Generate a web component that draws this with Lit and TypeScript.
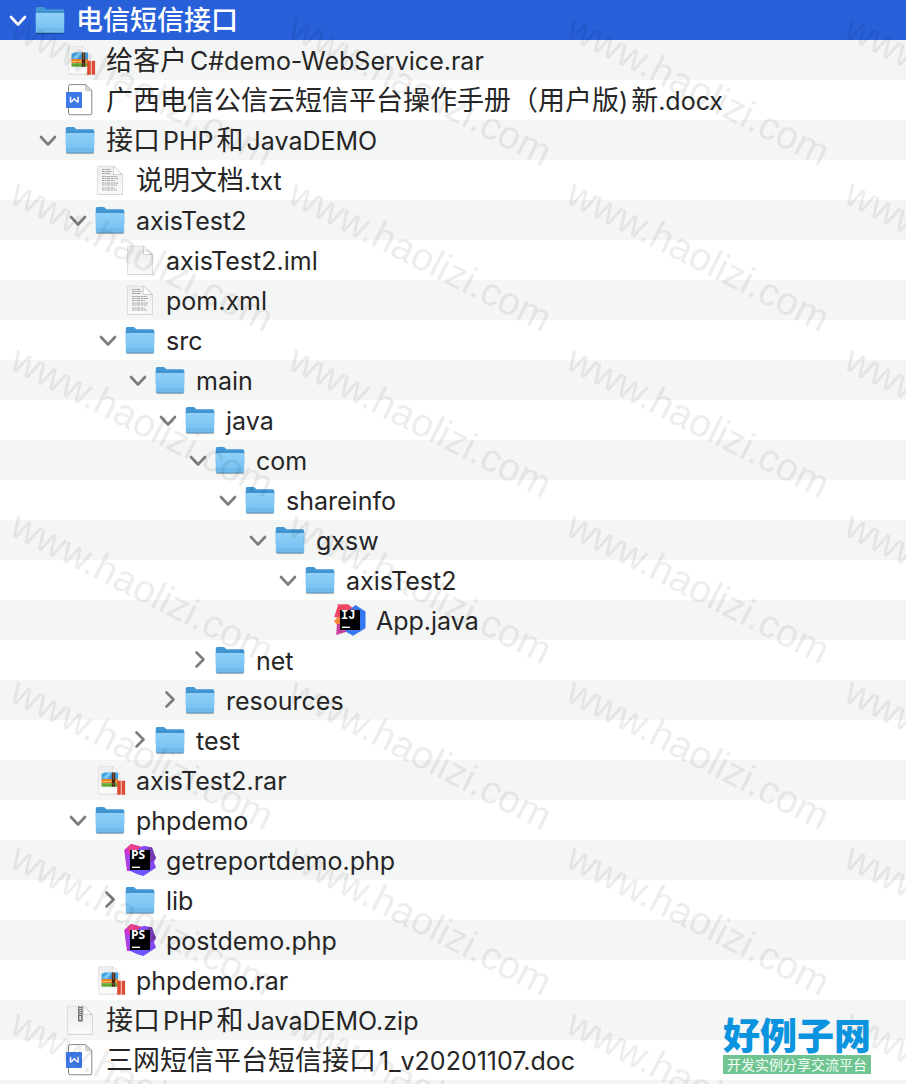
import { LitElement, html, css, svg, nothing } from 'lit';
import { customElement, property, state } from 'lit/decorators.js';
import { classMap } from 'lit/directives/class-map.js';
import { styleMap } from 'lit/directives/style-map.js';

type Kind = 'folder' | 'rar' | 'word' | 'text' | 'blank' | 'zip' | 'idea' | 'phpstorm';

interface Entry {
  name: string;
  kind: Kind;
  open?: boolean;
  children?: Entry[];
}

const folder = (name: string, children: Entry[], open = true): Entry => ({
  name,
  kind: 'folder',
  open,
  children,
});
const file = (name: string, kind: Kind): Entry => ({ name, kind });

const TREE: Entry = folder('电信短信接口', [
  file('给客户C#demo-WebService.rar', 'rar'),
  file('广西电信公信云短信平台操作手册（用户版)新.docx', 'word'),
  folder('接口PHP和JavaDEMO', [
    file('说明文档.txt', 'text'),
    folder('axisTest2', [
      file('axisTest2.iml', 'blank'),
      file('pom.xml', 'text'),
      folder('src', [
        folder('main', [
          folder('java', [
            folder('com', [
              folder('shareinfo', [
                folder('gxsw', [folder('axisTest2', [file('App.java', 'idea')])]),
              ]),
            ]),
            folder('net', [], false),
          ]),
          folder('resources', [], false),
        ]),
        folder('test', [], false),
      ]),
    ]),
    file('axisTest2.rar', 'rar'),
    folder('phpdemo', [
      file('getreportdemo.php', 'phpstorm'),
      folder('lib', [], false),
      file('postdemo.php', 'phpstorm'),
    ]),
    file('phpdemo.rar', 'rar'),
  ]),
  file('接口PHP和JavaDEMO.zip', 'zip'),
  file('三网短信平台短信接口1_v20201107.doc', 'word'),
]);

const page = svg`
  <path d="M3.500 2.500h16.500l8.800 8V31H3.500z" fill="#000" opacity=".2"/>
  <path d="M3.500 2h16l8.800 8.500V30.300H3.500z" fill="url(#paper)" stroke="#d6d6d6" stroke-width=".6"/>
  <path d="M19.500 2l8.500 8.500h-8.500z" fill="#fff" stroke="#c2c2c2" stroke-width=".7"/>
`;

const ICONS = {
  folder: svg`
    <path d="M2.500 28.500h27v1.600h-27z" fill="#000" opacity=".3"/>
    <path d="M1.800 4.500Q1.800 3 3.300 3h6q1 0 1.700.8l.8.900q.5.500 1.300.500h15.600Q30.200 5.200 30.200 6.700V20H1.800z" fill="#4297d6"/>
    <path d="M1.800 8.600q0-.8 1-.8h26.400q1 0 1 .8v1.500H1.800z" fill="#2f7fbd"/>
    <path d="M1.800 9.700q0-1 1-1h26.400q1 0 1 1v18q0 1.300-1.300 1.300H3.100Q1.800 29 1.800 27.700z" fill="url(#sky)"/>
    <path d="M2.300 24.700h27.400M2.300 26.700h27.400" stroke="#5aa7dc" stroke-width=".6"/>
    <path d="M2.300 28.500h27.400" stroke="#569fd0" stroke-width=".8"/>
  `,
  rar: svg`
    <path d="M4.500 3h14l7.500 8v19.500h-21.500z" fill="#000" opacity=".14"/>
    <path d="M4.500 2.500h14L26 10.500V30H4.500z" fill="url(#paper)" stroke="#dedede" stroke-width=".6"/>
    <path d="M18.500 2.500l7.500 8h-7.500z" fill="#fff" stroke="#cfcfcf" stroke-width=".6"/>
    <path d="M7.500 15V10l3-1.500H24V15z" fill="#3e9ee0"/>
    <path d="M8 14l6-5h4l-5 6z" fill="#7cc8f5"/>
    <path d="M7.500 15H24v4.200H7.500z" fill="#ec8330"/>
    <path d="M7.500 17h16.500v1H7.500z" fill="#f9bd54"/>
    <path d="M7.500 19.200H24v3.500H7.500z" fill="#63aa35"/>
    <path d="M17.800 8.500h3.400v14.200h-3.400z" fill="#57301c"/>
    <path d="M19.500 9.500v12" stroke="#b88a5c" stroke-width="1" stroke-dasharray="1 1"/>
    <path d="M18.500 15.500h2v3h-2z" fill="#32190d"/>
    <path d="M23.200 16.800h3.600v14h-3.600zM27.600 16.800h3.500v14h-3.500z" fill="#df4b32"/>
  `,
  word: svg`
    <path d="M6.500.6h15.300l6 6V28.800q0 2-2 2H6.500q-2 0-2-2V2.600q0-2 2-2z" fill="#fff" stroke="#777" stroke-width=".9"/>
    <path d="M21.500.8v4.700q0 1.300 1.300 1.300h5z" fill="#d7d7d7" stroke="#aaa" stroke-width=".5"/>
    <rect x="2" y="8" width="16" height="16" rx="1" fill="#3d78e8"/>
    <path d="M6.500 12.800v4.500q0 1.200 1 .4l2.800-2.900 2.800 2.900q1 .8 1-.4v-4.500" fill="none" stroke="#fff" stroke-width="1.500"/>
  `,
  text: svg`
    ${page}
    <path d="M8 5.500h9M8 7.500h10M8 9.500h9M8 12.500h15M8 14.500h16M8 16.500h13M8 19h16M8 21h15M8 24h13M8 26h15"
      stroke="#999" stroke-width=".9" stroke-dasharray="2.600 .6 1.400 .4 3.200 .7"/>
  `,
  blank: page,
  zip: svg`
    ${page}
    <path d="M14 2h4.600v15.500h-4.600z" fill="#777"/>
    <path d="M16.300 2v10" stroke="#e7e7e7" stroke-width="2" stroke-dasharray="1 1"/>
    <path d="M14.800 11.500h3v5h-3z" fill="#ddd" stroke="#555" stroke-width=".8"/>
  `,
  idea: svg`
    <path d="M4 1.500L3 .5 14 .2l5 4L11 15 .2 13z" fill="#ee4560"/>
    <path d="M0 17l4-4h8v10l-7 1z" fill="#f2873b"/>
    <path d="M3 20h12v7L2.200 31z" fill="#c83f9c"/>
    <path d="M15 6l6.500-5L31.500 7.500v16.700L19 31.700l-7.500-4.200z" fill="#3577f0"/>
    <path d="M15 6l4-2 7 8-8 3z" fill="#794fae"/>
    <rect x="6" y="6" width="20" height="20"/>
    <text class="mono" x="7" y="15">IJ</text>
    <path d="M8 23.300h8" stroke="#fff" stroke-width="1.400"/>
  `,
  phpstorm: svg`
    <path d="M.2 6L7 0l12 3 7 9-10 15H3z" fill="#c933ce"/>
    <path d="M7 0l11 3.500-3 5H5L3 4z" fill="#e8438a"/>
    <path d="M14 5l6-3.300 8 1.800 2 6 2 4.500-2 4 2 5.500-12.500 8.300L13 30z" fill="#8648f0"/>
    <path d="M24 3l4 .500 2 6 2 4.500-6 5z" fill="#7439ae"/>
    <path d="M1 10l8 3v11l4 6-9-4z" fill="#a044e8"/>
    <path d="M5 26l21-1 6-1.500-12.500 8.300L13 30z" fill="#6b57ff"/>
    <rect x="6" y="6" width="20" height="20"/>
    <text class="sans" x="7" y="15">PS</text>
    <path d="M8 23.300h8" stroke="#fff" stroke-width="1.400"/>
  `,
};

@customElement('file-icon')
export class FileIcon extends LitElement {
  @property() kind: Kind = 'folder';

  static styles = css`
    :host {
      display: block;
      flex: none;
      width: 32px;
      height: 32px;
    }
    svg { display: block; }
    text { fill: #fff; font-weight: 700; }
    .mono { font-family: "Liberation Mono", monospace; font-size: 12px; }
    .sans { font-family: "Open Sans", sans-serif; font-size: 12px; }
  `;

  render() {
    return html`
      <svg width="32" height="32" viewBox="0 0 32 32" aria-hidden="true">
        <defs>
          <linearGradient id="sky" x1="0" y1="0" x2="0" y2="1">
            <stop offset="0" stop-color="#8fd0f8"/>
            <stop offset="1" stop-color="#74bff2"/>
          </linearGradient>
          <linearGradient id="paper" x1="0" y1="0" x2="0" y2="1">
            <stop offset="0" stop-color="#ededed"/>
            <stop offset="1" stop-color="#fafafa"/>
          </linearGradient>
        </defs>
        ${ICONS[this.kind]}
      </svg>
    `;
  }
}

@customElement('tile-watermark')
export class TileWatermark extends LitElement {
  static styles = css`
    :host { display: block; }
    svg { display: block; width: 100%; height: 100%; }
    text {
      font-family: "Liberation Sans", Arial, sans-serif;
      font-size: 39px;
      fill: #000;
      fill-opacity: 0.07;
    }
  `;

  render() {
    return html`
      <svg aria-hidden="true">
        <defs>
          <pattern id="tile" width="278" height="166" patternUnits="userSpaceOnUse">
            <text transform="translate(8 36) rotate(27)">www.haolizi.com</text>
          </pattern>
        </defs>
        <rect width="100%" height="100%" fill="url(#tile)"/>
      </svg>
    `;
  }
}

@customElement('app-root')
export class AppRoot extends LitElement {
  @state() private selected: Entry = TREE;

  static styles = css`
    :host {
      --row: 40px;
      display: block;
      position: relative;
      min-height: 100vh;
      overflow: hidden;
      color: #262626;
      background: repeating-linear-gradient(#fff 0 var(--row), #f4f5f5 var(--row) 80px);
      font-family: Inter, "Noto Sans CJK SC", sans-serif;
      font-size: 27px;
      line-height: 38px;
    }

    ul { margin: 0; padding: 0; list-style: none; }

    .row {
      display: flex;
      align-items: center;
      height: var(--row);
      padding-left: 6px;
      white-space: nowrap;
      cursor: default;
    }
    .row.selected { background: #2860da; color: #fff; font-weight: 500; }

    .toggle {
      display: flex;
      align-items: center;
      justify-content: center;
      flex: none;
      width: 24px;
      height: 24px;
      margin-right: 4px;
      padding: 0;
      border: 0;
      background: none;
      color: #7b7c7c;
    }
    .toggle.leaf { visibility: hidden; }
    .selected .toggle { color: #fff; }

    .name { margin-left: 10px; padding-top: 2px; }
    .latin { font-size: 25px; }
    .spaced { margin-left: 3px; }

    tile-watermark {
      position: absolute;
      inset: 0;
      pointer-events: none;
    }

    .brand {
      position: absolute;
      right: 35px;
      bottom: 10px;
      width: 148px;
      text-align: center;
      font-family: "Noto Sans CJK SC", sans-serif;
      white-space: nowrap;
      text-decoration: none;
    }
    .brand-name {
      display: block;
      color: #0a94e0;
      font-size: 37px;
      font-weight: 900;
      line-height: 38px;
    }
    .brand-line {
      display: block;
      margin-top: 2px;
      background: #70c492;
      color: #f2fff5;
      font-size: 14px;
      line-height: 19px;
    }
  `;

  private toggle(entry: Entry) {
    entry.open = !entry.open;
    this.requestUpdate();
  }

  // Latin runs are set a little smaller and get some air next to Chinese ones
  private label(name: string) {
    const runs = name.match(/[\x20-\x7e]+|[^\x20-\x7e]+/g) ?? [];
    return runs.map((run, i) => {
      const latin = /^[\x20-\x7e]/.test(run);
      const spaced = i > 0 && (latin ? /^\w/.test(run) : true);
      return html`<span class=${classMap({ latin, spaced })}>${run}</span>`;
    });
  }

  private renderEntry(entry: Entry, depth = 0): unknown {
    const isFolder = entry.kind === 'folder';
    const selected = this.selected === entry;
    return html`
      <li>
        <div
          class=${classMap({ row: true, selected })}
          style=${styleMap({ paddingLeft: `${6 + depth * 30}px` })}
          @click=${() => (this.selected = entry)}
        >
          <button
            class=${classMap({ toggle: true, leaf: !isFolder })}
            aria-label=${entry.name}
            aria-expanded=${isFolder ? String(!!entry.open) : nothing}
            @click=${() => this.toggle(entry)}
          >
            <svg width="20" height="20" viewBox="0 0 20 20" fill="none" stroke="currentColor" stroke-width="2.600">
              <path
                d=${entry.open ? 'M3 7l7 7.500 7-7.500' : 'M8.500 2.500l7 7-7 7'}
                stroke-linecap="round"
                stroke-linejoin="round"
              />
            </svg>
          </button>
          <file-icon kind=${entry.kind}></file-icon>
          <span class="name">${this.label(entry.name)}</span>
        </div>
        ${entry.open && entry.children?.length
          ? html`<ul>${entry.children.map((child) => this.renderEntry(child, depth + 1))}</ul>`
          : nothing}
      </li>
    `;
  }

  render() {
    return html`
      <ul>${this.renderEntry(TREE)}</ul>
      <tile-watermark></tile-watermark>
      <a class="brand" href="#">
        <span class="brand-name">好例子网</span>
        <span class="brand-line">开发实例分享交流平台</span>
      </a>
    `;
  }
}
